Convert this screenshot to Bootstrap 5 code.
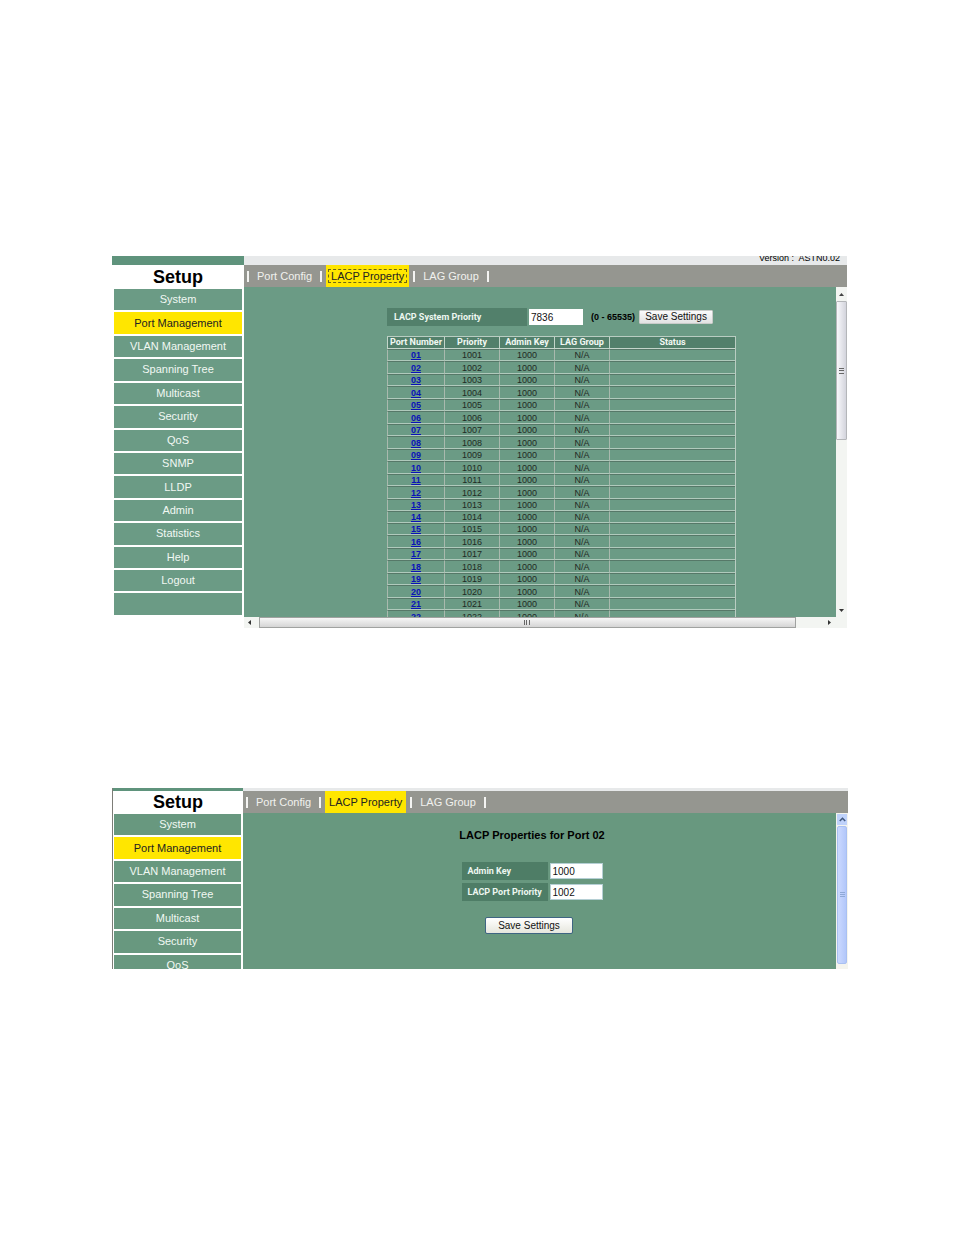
<!DOCTYPE html>
<html lang="en">
<head>
<meta charset="utf-8">
<meta name="viewport" content="width=device-width, initial-scale=1">
<title>LACP Property</title>
<link rel="stylesheet" href="https://cdn.jsdelivr.net/npm/bootstrap@5.3.0/dist/css/bootstrap.min.css">
<style>
:root{--green:#6b9b85;--dark:#52806b;--yellow:#ffe600;--grey:#959690;--strip:#e7e9ea;--pale:#f3f5f2}
body{font-family:"Liberation Sans",Arial,sans-serif;font-size:11px;line-height:13px;color:#000;background:#fff}
.page{padding:256px 107px 0 112px}
.page-2{--green:#68987f;--dark:#4e7d66;padding:160px 106px 0 112px}
.side{width:132px}
.page-2 .side{width:131px;border-left:1px solid #7d7d78}
.strip{height:9px;background:var(--strip);overflow:hidden;font-size:9px;line-height:10px;padding:0 7px 2px 0;white-space:pre}
.side .strip{background:#5f937c}
.page-2 .strip{height:3px;padding:0}
.setup{font-size:18px;line-height:24px;font-weight:bold;margin:0}
.page-2 .setup{line-height:23px}
.menu{height:326px;gap:2px;padding:0 2px}
.page-2 .menu{height:162px;padding-left:1px}
.menu a{flex:1 0 0;background:var(--green);color:#f1f8f3;text-decoration:none}
.menu a.active,.tabs a.active{background:var(--yellow);color:#222}
.tabs{height:22px;background:var(--grey);color:#fff;padding-left:2px}
.tabs a{color:#f1f1ee;text-decoration:none;line-height:22px;padding:0 7px}
.tabs a.active{padding:0 5px;margin:0 3px}
.page-2 .tabs a.active{padding:0 4px}
.sep{width:2px;height:11px;background:#f4f4f2;margin:0 1px}
.tabs a.focused{position:relative}
.tabs a.focused::after{content:"";position:absolute;inset:4px 2px 4px 2px;border:1px dashed #6f6616}
.pane{background:var(--green)}
.pane-list{height:330px;overflow:hidden;padding:21px 0 0 143px}
.pane-edit{height:156px;padding:15px 15px 0 0}
.cap,.ports th{font-family:Roboto,"Liberation Sans",sans-serif;font-weight:bold;font-size:9px}
.range{font-size:9px;font-weight:bold}
.cap{background:var(--dark);color:#edf7f0;line-height:18px;padding-left:7px;width:140px;white-space:nowrap}
.field{border:0;border-radius:0;background:#fff;font-size:10px;line-height:15px;height:16px;margin-left:2px;padding:0 2px;width:54px;color:#111}
.save{border:1px solid #c9cbc9;border-radius:1px;background:linear-gradient(#fbfbfb,#e2e2e2);font-size:10px;line-height:12px;height:14px;padding:0;width:74px;color:#111}
.ports{width:349px;table-layout:fixed;border-collapse:separate;border-spacing:0;font-size:9px;line-height:10px;margin-top:10px;border:1px solid #b9cdc2;border-width:1px 1px 0 0;text-align:center}
.ports th{background:var(--dark);color:#f1f8f3;line-height:11px;padding:0;border-left:1px solid #c3d5ca;border-bottom:1px solid #c3d5ca;white-space:nowrap}
.ports td{height:12px;padding:0;border-left:1px solid #a9b9ae;border-top:1px solid #567868;border-bottom:1px solid #b0cabc;color:#1f2a24}
.ports tr:nth-child(even) td{height:13px}
.ports tr:nth-child(14) td{height:12px}
.ports a{color:#0a12b8;font-weight:bold}
.w1{width:57px}.w2{width:55px}
.vbar{width:11px;background:var(--pale)}
.vbar .thumb{height:139px;border:1px solid #b4b6b9;border-radius:1px;background:linear-gradient(90deg,#f8f8fb,#d3d4dc)}
.btn-arrow{height:14px}
.hbar{height:11px;background:var(--pale)}
.hbar .thumb{flex:0 0 89%;width:89%;border:1px solid #a0a2a0;background:linear-gradient(#f6f6f6,#d5d5d5)}
.page-2 .vbar{width:12px;background:#f4f4ee;padding:1px}
.page-2 .btn-arrow{height:11px;background:#bfd2fb;margin-bottom:1px}
.page-2 .vbar .thumb{height:138px;border:1px solid #a9c0f2;border-radius:2px;background:linear-gradient(90deg,#cbd9ff,#b2c7fa)}
.page-2 .field{width:53px;border:1px solid #b5cfd4;line-height:14px}
.page-2 .cap{width:86px;padding-left:6px}
.form-line{margin-bottom:3px}
.page-2 .save{width:88px;height:17px;margin:13px 6px 0 0;border:1px solid #3f6583;border-radius:2px;background:linear-gradient(#fff,#e6e6dd)}
.title{font-size:11px;line-height:14px;font-weight:bold;margin:0 0 20px}
.clip{height:181px;overflow:hidden}
svg{display:block}
</style>
</head>
<body>
<section class="page">
  <div class="d-flex">
    <aside class="side flex-shrink-0">
      <div class="strip"></div>
      <h1 class="setup text-center">Setup</h1>
      <nav class="menu d-flex flex-column" aria-label="Setup">
        <a class="d-flex align-items-center justify-content-center" href="#">System</a>
        <a class="d-flex align-items-center justify-content-center active" href="#">Port Management</a>
        <a class="d-flex align-items-center justify-content-center" href="#">VLAN Management</a>
        <a class="d-flex align-items-center justify-content-center" href="#">Spanning Tree</a>
        <a class="d-flex align-items-center justify-content-center" href="#">Multicast</a>
        <a class="d-flex align-items-center justify-content-center" href="#">Security</a>
        <a class="d-flex align-items-center justify-content-center" href="#">QoS</a>
        <a class="d-flex align-items-center justify-content-center" href="#">SNMP</a>
        <a class="d-flex align-items-center justify-content-center" href="#">LLDP</a>
        <a class="d-flex align-items-center justify-content-center" href="#">Admin</a>
        <a class="d-flex align-items-center justify-content-center" href="#">Statistics</a>
        <a class="d-flex align-items-center justify-content-center" href="#">Help</a>
        <a class="d-flex align-items-center justify-content-center" href="#">Logout</a>
        <a class="d-flex" aria-hidden="true"></a>
      </nav>
    </aside>
    <main class="flex-grow-1">
      <div class="strip d-flex align-items-end justify-content-end">Version :  ASTN0.02</div>
      <nav class="tabs d-flex align-items-center" aria-label="Ports">
        <span class="sep"></span><a href="#">Port Config</a><span class="sep"></span><a class="active focused" href="#">LACP Property</a><span class="sep"></span><a href="#">LAG Group</a><span class="sep"></span>
      </nav>
      <div class="d-flex">
        <div class="pane pane-list flex-grow-1">
          <form class="d-flex align-items-center">
            <label class="cap" for="sysprio">LACP System Priority</label>
            <input class="field" id="sysprio" type="text" value="7836">
            <span class="range ms-2">(0 - 65535)</span>
            <button class="save ms-1" type="button">Save Settings</button>
          </form>
          <table class="ports">
            <thead><tr><th class="w1">Port Number</th><th class="w2">Priority</th><th class="w2">Admin Key</th><th class="w2">LAG Group</th><th>Status</th></tr></thead>
            <tbody id="rows"></tbody>
          </table>
        </div>
        <div class="vbar d-flex flex-column">
          <div class="btn-arrow d-flex align-items-center justify-content-center"><svg width="5" height="3"><path d="M0 3L2.500 0L5 3Z" fill="#444"/></svg></div>
          <div class="thumb d-flex align-items-center justify-content-center"><svg width="5" height="6"><path d="M0 .5H5M0 2.500H5M0 5.500H5" stroke="#666"/></svg></div>
          <div class="btn-arrow d-flex align-items-center justify-content-center mt-auto"><svg width="5" height="3"><path d="M0 0L2.500 3L5 0Z" fill="#333"/></svg></div>
        </div>
      </div>
      <div class="hbar d-flex">
        <div class="vbar d-flex align-items-center justify-content-center"><svg width="3" height="5"><path d="M3 0L0 2.500L3 5Z" fill="#333"/></svg></div>
        <div class="thumb d-flex align-items-center justify-content-center ms-1 me-auto"><svg width="6" height="5"><path d="M.5 0V5M2.500 0V5M5.500 0V5" stroke="#666"/></svg></div>
        <div class="d-flex align-items-center pe-3"><svg width="3" height="5"><path d="M0 0L3 2.500L0 5Z" fill="#333"/></svg></div>
      </div>
    </main>
  </div>
</section>

<section class="page page-2">
  <div class="d-flex clip">
    <aside class="side flex-shrink-0">
      <div class="strip"></div>
      <h2 class="setup text-center">Setup</h2>
      <nav class="menu d-flex flex-column" aria-label="Setup, port view">
        <a class="d-flex align-items-center justify-content-center" href="#">System</a>
        <a class="d-flex align-items-center justify-content-center active" href="#">Port Management</a>
        <a class="d-flex align-items-center justify-content-center" href="#">VLAN Management</a>
        <a class="d-flex align-items-center justify-content-center" href="#">Spanning Tree</a>
        <a class="d-flex align-items-center justify-content-center" href="#">Multicast</a>
        <a class="d-flex align-items-center justify-content-center" href="#">Security</a>
        <a class="d-flex align-items-center justify-content-center" href="#">QoS</a>
      </nav>
    </aside>
    <main class="flex-grow-1">
      <div class="strip"></div>
      <nav class="tabs d-flex align-items-center" aria-label="Ports, port view">
        <span class="sep"></span><a href="#">Port Config</a><span class="sep"></span><a class="active" href="#">LACP Property</a><span class="sep"></span><a href="#">LAG Group</a><span class="sep"></span>
      </nav>
      <div class="d-flex">
        <form class="pane pane-edit flex-grow-1 d-flex flex-column align-items-center">
          <h3 class="title">LACP Properties for Port 02</h3>
          <div class="form-line d-flex align-items-center"><label class="cap" for="adminkey">Admin Key</label><input class="field" id="adminkey" type="text" value="1000"></div>
          <div class="form-line d-flex align-items-center"><label class="cap" for="portprio">LACP Port Priority</label><input class="field" id="portprio" type="text" value="1002"></div>
          <button class="save" type="button">Save Settings</button>
        </form>
        <div class="vbar">
          <div class="btn-arrow d-flex align-items-center justify-content-center"><svg width="7" height="5"><path d="M.8 4L3.500 1.300L6.200 4" fill="none" stroke="#42597f" stroke-width="1.600"/></svg></div>
          <div class="thumb d-flex align-items-center justify-content-center"><svg width="5" height="6"><path d="M0 .5H5M0 2.500H5M0 4.500H5" stroke="#8fa9d6"/></svg></div>
        </div>
      </div>
    </main>
  </div>
</section>
<script src="https://cdn.jsdelivr.net/npm/bootstrap@5.3.0/dist/js/bootstrap.bundle.min.js"></script>
<script>
// One row for each switch port
const rows = document.getElementById('rows');
for (let p = 1; p <= 22; p++) {
  const n = String(p).padStart(2, '0');
  rows.insertAdjacentHTML('beforeend', `<tr><td><a href="#">${n}</a></td><td>${1000 + p}</td><td>1000</td><td>N/A</td><td></td></tr>`);
}
</script>
</body>
</html>
